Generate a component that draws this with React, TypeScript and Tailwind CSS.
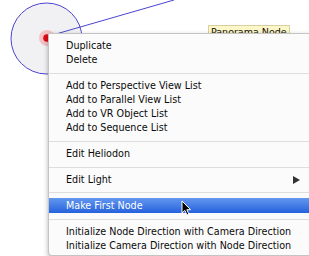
import React from 'react';

type Entry = { label?: string; sep?: boolean; sub?: boolean; active?: boolean; h?: string };

const entries: Entry[] = [
  { label: 'Duplicate' },
  { label: 'Delete' },
  { sep: true, h: 'h-[12px]' },
  { label: 'Add to Perspective View List' },
  { label: 'Add to Parallel View List' },
  { label: 'Add to VR Object List' },
  { label: 'Add to Sequence List' },
  { sep: true, h: 'h-[12px]' },
  { label: 'Edit Heliodon' },
  { sep: true, h: 'h-[12px]' },
  { label: 'Edit Light', sub: true },
  { sep: true, h: 'h-[11px]' },
  { label: 'Make First Node', active: true, h: 'h-[15px]' },
  { sep: true, h: 'h-[12px]' },
  { label: 'Initialize Node Direction with Camera Direction' },
  { label: 'Initialize Camera Direction with Node Direction' },
];

function Cursor() {
  return (
    <svg width="12" height="16" viewBox="0 0 12 16" className="absolute left-[181px] top-[200px] z-30">
      <path
        d="M1 1 L1 13 L3.8 10.4 L6 15 L7.9 14.1 L5.8 9.7 L9.6 9.7 Z"
        fill="#000"
        stroke="#fff"
        strokeWidth="1"
        strokeLinejoin="round"
      />
    </svg>
  );
}

function ContextMenu() {
  return (
    <div
      className="absolute left-[48px] top-[33px] z-20 w-[275px] bg-[#fbfbfb] border border-[#c4c4c4] rounded-b-[4px] pt-[5px] pb-[2px] shadow-[0_2px_5px_rgba(0,0,0,0.3)]"
      style={{ fontFamily: '"DejaVu Sans", Verdana, sans-serif' }}
    >
      {entries.map((e, i) =>
        e.sep ? (
          <div key={i} className={`${e.h} flex items-center`}>
            <div className="h-px w-full bg-[#dedede]" />
          </div>
        ) : (
          <div
            key={i}
            className={
              e.active
                ? 'h-[15px] flex items-center pl-[17px] text-[9.6px] leading-none text-white bg-linear-to-b from-[#6397ee] to-[#2561dd]'
                : 'h-[14px] flex items-center pl-[17px] text-[9.6px] leading-none text-[#0a0a0a]'
            }
          >
            <span className="flex-1">{e.label}</span>
            {e.sub && (
              <svg width="7" height="8" viewBox="0 0 7 8" className="mr-[22px]">
                <path d="M0 0 L7 4 L0 8 Z" fill="#333" />
              </svg>
            )}
          </div>
        )
      )}
    </div>
  );
}

export default function App() {
  return (
    <div className="relative w-[309px] h-[256px] bg-white overflow-hidden">
      {/* canvas drawing */}
      <svg width="309" height="256" className="absolute left-0 top-0">
        <circle cx="46.5" cy="38.5" r="35.5" fill="#f1f1f3" stroke="#4b44d0" strokeWidth="1" />
        <line x1="56" y1="34" x2="174" y2="0" stroke="#4b44d0" strokeWidth="1" />
        <circle cx="47" cy="38" r="8" fill="#f3c2c4" />
        <circle cx="47" cy="38" r="3.8" fill="#e20a12" />
      </svg>

      {/* node tooltip */}
      <div
        className="absolute left-[208px] top-[25px] z-10 h-[18px] px-[2px] bg-[#fdf6c6] border border-[#d9d0a2] text-[9.5px] leading-[11px] text-[#111]"
        style={{ fontFamily: '"DejaVu Sans", Verdana, sans-serif' }}
      >
        Panorama Node
      </div>

      <ContextMenu />
      <Cursor />
    </div>
  );
}
